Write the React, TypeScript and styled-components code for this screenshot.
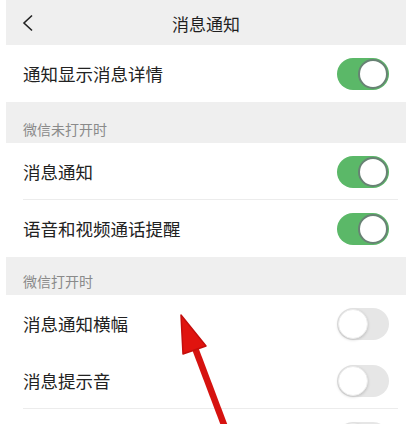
import React from 'react';
import styled, { createGlobalStyle } from 'styled-components';

const GlobalStyle = createGlobalStyle`
    html, body {
        margin: 0;
        padding: 0;
        background: #ffffff;
        font-family: "Noto Sans CJK SC", "Noto Sans", sans-serif;
    }
`;

const Page = styled.div`
    position: relative;
    width: 412px;
    height: 424px;
    overflow: hidden;
    background: #ffffff;
`;

const Screen = styled.div`
    display: flex;
    flex-direction: column;
    margin: 0 6px;
`;

const Header = styled.div`
    display: grid;
    grid-template-columns: 40px 1fr 40px;
    align-items: center;
    height: 45px;
    background: #efefef;
`;

const Back = styled.div`
    display: flex;
    align-items: center;
    padding-left: 16px;
`;

const Title = styled.div`
    text-align: center;
    font-size: 17px;
    color: #1f1f1f;
    padding-top: 1px;
`;

const Section = styled.div<{ h: number }>`
    display: flex;
    align-items: flex-end;
    height: ${(p) => p.h}px;
    padding: 0 17px 4px;
    box-sizing: border-box;
    background: #efefef;
    font-size: 14px;
    color: #8a8a8a;
`;

const Row = styled.div<{ divider?: boolean }>`
    display: flex;
    align-items: center;
    justify-content: space-between;
    height: 57px;
    padding: 0 17px;
    background: #ffffff;
    position: relative;
    &::after {
        content: '';
        display: ${(p) => (p.divider ? 'block' : 'none')};
        position: absolute;
        left: 17px;
        right: 8px;
        bottom: 0;
        height: 1px;
        background: #ececec;
    }
`;

const Label = styled.span`
    font-size: 17.5px;
    color: #222222;
`;

const Track = styled.div<{ on: boolean }>`
    position: relative;
    width: 52px;
    height: 32px;
    border-radius: 16px;
    background: ${(p) => (p.on ? '#5bb868' : '#e6e6e6')};
`;

const Knob = styled.div<{ on: boolean }>`
    position: absolute;
    top: 1px;
    left: ${(p) => (p.on ? '21px' : '1px')};
    width: 30px;
    height: 30px;
    border-radius: 50%;
    box-sizing: border-box;
    background: #ffffff;
    border: ${(p) => (p.on ? '2px solid #688274' : '1px solid #ececec')};
    box-shadow: ${(p) => (p.on ? 'none' : '0 1px 3px rgba(0,0,0,0.18)')};
`;

const Group = styled.div`
    display: flex;
    flex-direction: column;
`;

const Overlay = styled.svg`
    position: absolute;
    left: 0;
    top: 0;
    pointer-events: none;
`;

const Toggle = ({ on }: { on: boolean }) => (
    <Track on={on}>
        <Knob on={on} />
    </Track>
);

export default function App() {
    return (
        <Page>
            <GlobalStyle />
            <Screen>
                <Header>
                    <Back>
                        <svg width="12" height="18" viewBox="0 0 12 18">
                            <polyline points="10,1.5 2,9 10,16.5" fill="none" stroke="#222" strokeWidth="1.6" />
                        </svg>
                    </Back>
                    <Title>消息通知</Title>
                    <div />
                </Header>
                <Group>
                    <Row>
                        <Label>通知显示消息详情</Label>
                        <Toggle on />
                    </Row>
                </Group>
                <Section h={41}>微信未打开时</Section>
                <Group>
                    <Row divider>
                        <Label>消息通知</Label>
                        <Toggle on />
                    </Row>
                    <Row>
                        <Label>语音和视频通话提醒</Label>
                        <Toggle on />
                    </Row>
                </Group>
                <Section h={38}>微信打开时</Section>
                <Group>
                    <Row>
                        <Label>消息通知横幅</Label>
                        <Toggle on={false} />
                    </Row>
                    <Row divider>
                        <Label>消息提示音</Label>
                        <Toggle on={false} />
                    </Row>
                    <Row>
                        <Label />
                        <Toggle on={false} />
                    </Row>
                </Group>
            </Screen>
            <Overlay width="412" height="424" viewBox="0 0 412 424">
                <line x1="195" y1="348" x2="226" y2="430" stroke="#d6120f" strokeWidth="6.5" />
                <polygon points="181,315 183,354 206,346" fill="#e0140f" stroke="#c40e0c" strokeWidth="1.5" strokeLinejoin="round" />
            </Overlay>
        </Page>
    );
}
